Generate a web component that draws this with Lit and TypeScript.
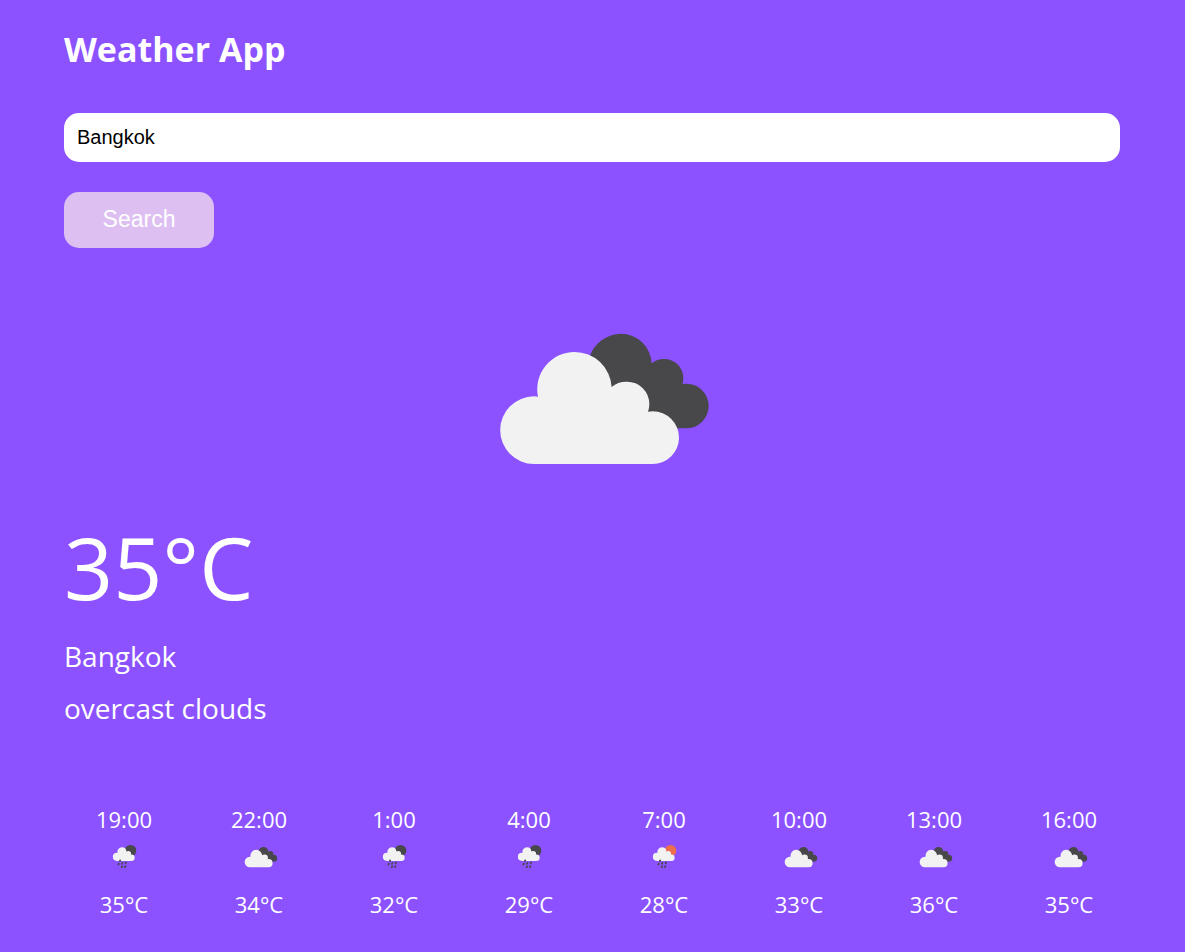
import { LitElement, html, svg, css } from "lit";
import { customElement, property, state } from "lit/decorators.js";

type Sky = "clouds" | "rain-night" | "rain-day";

interface Slot {
  time: string;
  sky: Sky;
  temp: number;
}

const lightCloud = svg`
  <path d="M163 462 A101.5 101.5 0 0 1 163 259 L175 260 A111.5 111.5 0 0 1 284.5 126
    A111.5 111.5 0 0 1 396 231 A67 67 0 0 1 442 215 A67 67 0 0 1 509 282 Q509 295 505 305
    L519 304 A79 79 0 0 1 519 462 Z" fill="#f2f2f2" />
`;

@customElement("weather-icon")
export class WeatherIcon extends LitElement {
  @property() sky: Sky = "clouds";

  static styles = css`
    :host {
      display: block;
    }
    .icon {
      display: block;
      width: 100%;
    }
  `;

  render() {
    if (this.sky === "clouds") {
      return html`
        <svg class="icon" viewBox="-143 -63 960 660" role="img" aria-label="overcast clouds">
          <path
            d="M331 137 A101 101 0 0 1 423 71 A93 93 0 0 1 516 160 A57 57 0 0 1 554 147
              A57 57 0 0 1 611 204 L609 222 L620 221 A67 67 0 0 1 620 355 L400 355 Z"
            fill="#48484a"
          />
          ${lightCloud}
        </svg>
      `;
    }
    return html`
      <svg class="icon" viewBox="0 8 960 660" role="img" aria-label="rain">
        <circle cx="606" cy="212" r="110" fill=${this.sky === "rain-day" ? "#ec6e4c" : "#48484a"} />
        <g transform="translate(218 50) scale(0.78)">${lightCloud}</g>
        <g stroke="#48484a" stroke-width="34" stroke-linecap="round">
          <path d="M406 398 l-4 10 M382 462 l-10 16 M450 450 l-10 16 M520 438 l-10 16 M446 514 l-10 16 M508 510 l-10 16" />
        </g>
      </svg>
    `;
  }
}

@customElement("app-root")
export class AppRoot extends LitElement {
  @state() private city = "Bangkok";
  @state() private query = "Bangkok";

  private slots: Slot[] = [
    { time: "19:00", sky: "rain-night", temp: 35 },
    { time: "22:00", sky: "clouds", temp: 34 },
    { time: "1:00", sky: "rain-night", temp: 32 },
    { time: "4:00", sky: "rain-night", temp: 29 },
    { time: "7:00", sky: "rain-day", temp: 28 },
    { time: "10:00", sky: "clouds", temp: 33 },
    { time: "13:00", sky: "clouds", temp: 36 },
    { time: "16:00", sky: "clouds", temp: 35 },
  ];

  static styles = css`
    :host {
      display: block;
      box-sizing: border-box;
      min-height: 100vh;
      padding: 24px 65px 24px 64px;
      background: #8c52ff;
      color: #fff;
      font-family: "Segoe UI", "Open Sans", "Noto Sans", sans-serif;
    }
    .title {
      margin: 0 0 39px;
      font-size: 34px;
      line-height: 50px;
      font-weight: 700;
    }
    .search {
      display: flex;
      flex-direction: column;
      align-items: flex-start;
      gap: 30px;
    }
    .city {
      box-sizing: border-box;
      width: 100%;
      height: 49px;
      padding: 0 13px;
      border: 0;
      border-radius: 15px;
      background: #fff;
      color: #000;
      font: 20px "Liberation Sans", Arial, sans-serif;
    }
    .submit {
      width: 150px;
      height: 56px;
      padding: 0 0 2px;
      border: 0;
      border-radius: 15px;
      background: #debff2;
      color: #fff;
      font: 23px "Liberation Sans", Arial, sans-serif;
      cursor: pointer;
    }
    .hero {
      width: 320px;
      margin: 41px auto 0;
    }
    .temp {
      margin: 0;
      font-size: 86px;
      line-height: 116px;
    }
    .line {
      margin: 0;
      font-size: 28px;
      line-height: 52px;
    }
    .place {
      margin-top: 5px;
    }
    .forecast {
      display: flex;
      gap: 15px;
      margin: 69px 0 0;
      padding: 0;
      list-style: none;
      font-size: 22px;
      line-height: 32px;
    }
    .slot {
      flex: 0 0 120px;
      display: flex;
      flex-direction: column;
      align-items: center;
    }
    .small {
      width: 50px;
      margin: 5px 0 14px;
    }
  `;

  private search(e: Event) {
    e.preventDefault();
    this.city = this.query;
  }

  render() {
    return html`
      <h1 class="title">Weather App</h1>
      <form class="search" @submit=${this.search}>
        <input
          class="city"
          type="text"
          aria-label="City"
          .value=${this.query}
          @input=${(e: Event) => (this.query = (e.target as HTMLInputElement).value)}
        />
        <button class="submit" type="submit">Search</button>
      </form>
      <weather-icon class="hero" sky="clouds"></weather-icon>
      <p class="temp">35°C</p>
      <p class="line place">${this.city}</p>
      <p class="line">overcast clouds</p>
      <ul class="forecast">
        ${this.slots.map(
          (s) => html`
            <li class="slot">
              <span>${s.time}</span>
              <weather-icon class="small" sky=${s.sky}></weather-icon>
              <span>${s.temp}°C</span>
            </li>
          `
        )}
      </ul>
    `;
  }
}
